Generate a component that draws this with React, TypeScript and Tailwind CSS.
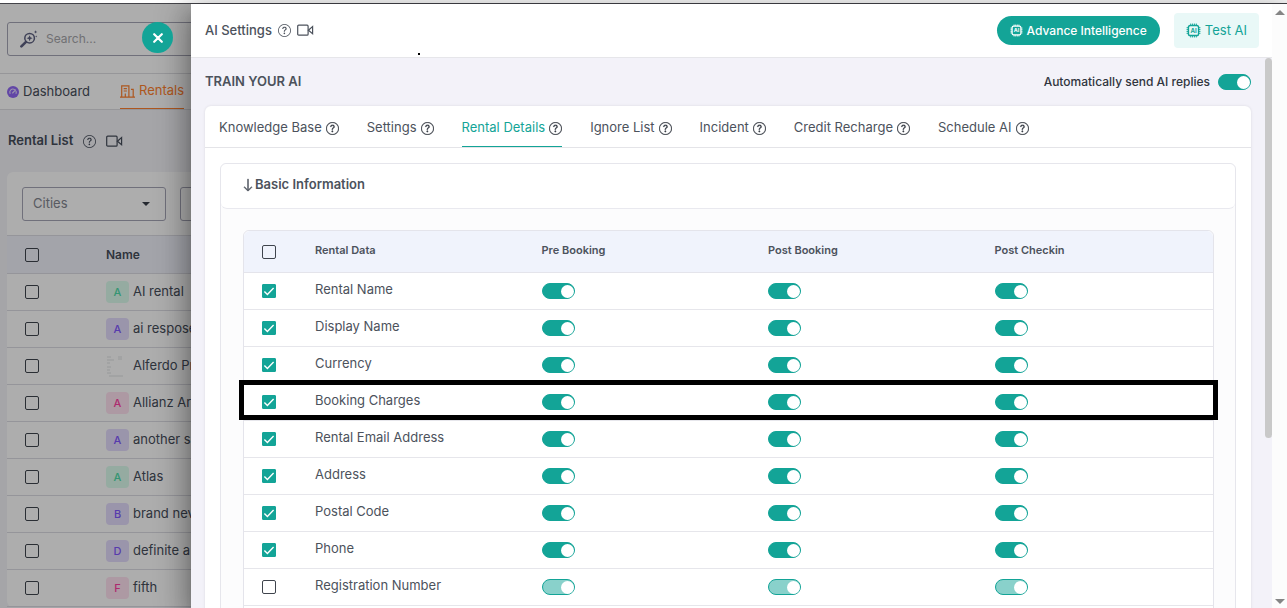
import { BsArrowDown, BsQuestionCircle } from "react-icons/bs";

type Rental = {
  name: string;
  tone?: "green" | "purple" | "pink";
};

const rentals: Rental[] = [
  { name: "AI rental", tone: "green" },
  { name: "ai respose", tone: "purple" },
  { name: "Alferdo Pr" },
  { name: "Allianz Are", tone: "pink" },
  { name: "another s", tone: "purple" },
  { name: "Atlas", tone: "green" },
  { name: "brand nev", tone: "purple" },
  { name: "definite a", tone: "purple" },
  { name: "fifth", tone: "pink" },
];

const tones = {
  green: "bg-[#dcfcee] text-[#4fdcaa]",
  purple: "bg-[#e4dcfd] text-[#8058ff]",
  pink: "bg-[#ffe2f1] text-[#ff3fa4]",
};

const tabs = [
  "Knowledge Base",
  "Settings",
  "Rental Details",
  "Ignore List",
  "Incident",
  "Credit Recharge",
  "Schedule AI",
];

const stages = ["Pre Booking", "Post Booking", "Post Checkin"];

const fields = [
  { label: "Rental Name", on: true },
  { label: "Display Name", on: true },
  { label: "Currency", on: true },
  { label: "Booking Charges", on: true, highlight: true },
  { label: "Rental Email Address", on: true },
  { label: "Address", on: true },
  { label: "Postal Code", on: true },
  { label: "Phone", on: true },
  { label: "Registration Number", on: false },
  { label: "Property Type", on: false },
];

const Checkbox = ({ label, checked = false }: { label: string; checked?: boolean }) => (
  <span className="grid size-[14px]">
    <input
      type="checkbox"
      aria-label={label}
      defaultChecked={checked}
      className="peer size-[14px] appearance-none rounded-[2px] border border-[#3f444d] [grid-area:1/1] checked:rounded-[1px] checked:border-[#13a497] checked:bg-[#13a497]"
    />
    <svg
      viewBox="0 0 14 14"
      className="pointer-events-none hidden size-[14px] [grid-area:1/1] peer-checked:block"
      fill="none"
      stroke="white"
      strokeWidth="1.4"
    >
      <path d="M2.4 7.4l3 3 6.2-6.4" />
    </svg>
  </span>
);

const Switch = ({ label, disabled = false }: { label: string; disabled?: boolean }) => (
  <input
    type="checkbox"
    role="switch"
    aria-label={label}
    defaultChecked
    disabled={disabled}
    className="flex h-4 w-[33px] shrink-0 appearance-none items-center rounded-full border border-[#13a497] bg-[#b8b8b8] before:size-[13px] before:rounded-full before:bg-white checked:justify-end checked:bg-[#13a497] disabled:bg-[#89d1cb]"
  />
);

const VideoIcon = () => (
  <svg viewBox="0 0 17 13" className="h-[13px] w-[17px]" fill="none" stroke="currentColor" strokeWidth="1.2">
    <rect x="0.7" y="1.2" width="10.4" height="10" rx="1" />
    <path d="M11.4 6.2l4.2-3.6v7.2z" />
  </svg>
);

const ChipIcon = ({ className }: { className: string }) => (
  <svg viewBox="0 0 16 16" className={className} fill="none" stroke="currentColor">
    <rect x="2.6" y="2.6" width="10.8" height="10.8" rx="2" strokeWidth="1.5" />
    <path
      d="M5 .6v2M7 .6v2M9 .6v2M11 .6v2M5 13.4v2M7 13.4v2M9 13.4v2M11 13.4v2M.6 5h2M.6 7h2M.6 9h2M.6 11h2M13.4 5h2M13.4 7h2M13.4 9h2M13.4 11h2"
      strokeWidth="1"
    />
    <text x="8" y="10.4" textAnchor="middle" fontSize="6.5" fontWeight="700" fill="currentColor" stroke="none">
      AI
    </text>
  </svg>
);

const SearchIcon = () => (
  <svg viewBox="0 0 18 18" className="size-[18px] text-[#5d6080]" fill="none" stroke="currentColor">
    <circle cx="9.6" cy="8.2" r="4.8" strokeWidth="1.5" />
    <path d="M6 11.8l-4.6 4.6" strokeWidth="2.6" strokeLinecap="round" />
    <path d="M9.6 5.2l.9 2.1 2.1.9-2.1.9-.9 2.1-.9-2.1-2.1-.9 2.1-.9z" fill="currentColor" stroke="none" />
    <path d="M15.6.2l.5 1.2 1.2.5-1.2.5-.5 1.2-.5-1.2-1.2-.5 1.2-.5zM16.2 5.4l.3.7.7.3-.7.3-.3.7-.3-.7-.7-.3.7-.3z" fill="currentColor" stroke="none" />
  </svg>
);

const DashboardIcon = () => (
  <svg viewBox="0 0 12 12" className="size-3" fill="none">
    <circle cx="6" cy="6" r="6" fill="#9168f5" />
    <path d="M3 7.4a3.2 3.2 0 0 1 4.4-4M9 5.2a3.2 3.2 0 0 1 .1 2.2M5.6 7l3-3.2" stroke="#e6dcff" strokeWidth="1.1" strokeLinecap="round" />
  </svg>
);

const BuildingIcon = () => (
  <svg viewBox="0 0 15 13" className="h-[13px] w-[15px]" fill="none" stroke="currentColor" strokeWidth="1.2">
    <path d="M0 12.2h15M1.7 12V.9h7.2V12M11 4.4h2.2V12M3.7 3.6h3.2M3.7 6h3.2M5.3 12V8.6" />
  </svg>
);

const RentalsPage = () => (
  <aside className="relative w-[191px] shrink-0 overflow-hidden whitespace-nowrap bg-[#f3f3f8] text-[#464d5a]">
    <div className="flex h-[70px] items-center border-b border-[#dddde2] bg-white pl-[7px]">
      <label className="flex h-[34px] w-[240px] shrink-0 items-center gap-2 rounded-[3px] border border-[#a5a5b6] pl-3">
        <SearchIcon />
        <input
          type="text"
          placeholder="Search..."
          aria-label="Search"
          className="w-24 text-xs outline-none placeholder:text-[#a6a6aa]"
        />
      </label>
    </div>

    <nav className="flex h-9 gap-[30px] border-b border-[#dddde2] bg-white pl-[7px] text-[13px]">
      <a href="#dashboard" className="flex items-center gap-1">
        <DashboardIcon />
        Dashboard
      </a>
      <a href="#rentals" className="flex items-center gap-1 border-b border-[#ff812e] text-[#ff812e]">
        <BuildingIcon />
        Rentals
      </a>
    </nav>

    <div className="flex h-[62px] items-center gap-[10px] pl-2">
      <h1 className="text-[13px] font-semibold">Rental List</h1>
      <BsQuestionCircle className="size-[13px]" />
      <VideoIcon />
    </div>

    <section className="ml-[7px] w-[600px] rounded-md bg-white">
      <div className="flex h-[63px] items-center gap-[14px] px-[15px]">
        {["Cities", "Status"].map((name) => (
          <div key={name} className="grid items-center">
            <select
              aria-label={name}
              className="h-[34px] w-36 appearance-none rounded-[3px] border border-[#a5a5b6] px-[10px] text-[13px] text-[#82858f] [grid-area:1/1]"
            >
              <option>{name}</option>
            </select>
            <span className="pointer-events-none mr-4 justify-self-end border-x-4 border-t-4 border-x-transparent border-t-[#373d48] [grid-area:1/1]" />
          </div>
        ))}
      </div>
      <table className="w-full table-fixed text-left">
        <colgroup>
          <col className="w-[90px]" />
          <col />
        </colgroup>
        <thead>
          <tr className="h-[38px] border-y border-[#dcdce4] bg-[#f0f2fb] text-xs">
            <th className="pl-[18px]">
              <Checkbox label="Select all rentals" />
            </th>
            <th className="pl-[9px] font-semibold">Name</th>
          </tr>
        </thead>
        <tbody>
          {rentals.map(({ name, tone }) => (
            <tr key={name} className="h-[37px] border-b border-[#dcdce4] text-[13px]">
              <td className="pl-[18px]">
                <Checkbox label={`Select ${name}`} />
              </td>
              <td className="pl-[9px]">
                <div className="flex items-center gap-1">
                  {tone ? (
                    <span className={`grid h-[22px] w-[23px] place-items-center rounded text-[11px] font-medium ${tones[tone]}`}>
                      {name[0].toUpperCase()}
                    </span>
                  ) : (
                    <svg viewBox="0 0 23 22" className="h-[22px] w-[23px]" stroke="#dfe1e4" strokeWidth="1">
                      <path d="M1 2h4M1 5h7M12 2h4M12 4h4M1 8h3M1 12h4M1 15h3M1 18h4M3 21h14" />
                    </svg>
                  )}
                  {name}
                </div>
              </td>
            </tr>
          ))}
        </tbody>
      </table>
    </section>

    <div className="absolute inset-0 bg-black/32" />
    <button
      type="button"
      aria-label="Close"
      className="absolute top-[18px] left-[142px] z-20 grid size-[31px] place-items-center rounded-full bg-[#13a497]"
    >
      <svg viewBox="0 0 10 10" className="size-[10px]" stroke="white" strokeWidth="2.2" strokeLinecap="round">
        <path d="M1.2 1.2l7.6 7.6M8.8 1.2L1.2 8.8" />
      </svg>
    </button>
  </aside>
);

const DrawerHeader = () => (
  <header className="relative flex h-[54px] shrink-0 items-center justify-between border-b border-[#e6e6ea] bg-white pr-[13px] pl-[14px]">
    <div className="flex items-center gap-[6px]">
      <h2 className="text-[13px] font-medium">AI Settings</h2>
      <BsQuestionCircle className="size-[13px]" />
      <VideoIcon />
    </div>
    <span className="absolute bottom-[2px] left-[227px] size-[2px] bg-black" />
    <div className="flex items-center gap-[14px]">
      <button
        type="button"
        className="flex h-[29px] items-center gap-1 rounded-full bg-[#13a497] px-[13px] text-xs font-medium text-white"
      >
        <ChipIcon className="size-[13px]" />
        Advance Intelligence
      </button>
      <button
        type="button"
        className="flex h-[35px] items-center gap-1 rounded bg-[#e9f8f7] px-3 text-[13px] text-[#13a497]"
      >
        <ChipIcon className="size-[15px]" />
        Test AI
      </button>
    </div>
  </header>
);

const DetailsTable = () => (
  <table className="w-full table-fixed border-separate border-spacing-0 rounded-md border border-[#e4e4eb] bg-white text-left">
    <colgroup>
      <col className="w-[63px]" />
      <col />
      <col />
      <col />
      <col />
    </colgroup>
    <thead>
      <tr className="h-[42px] text-[11px] [&>th]:border-b [&>th]:border-[#e4e4eb] [&>th]:bg-[#f0f3fc]">
        <th className="rounded-tl-md pl-[18px]">
          <Checkbox label="Select all rental data" />
        </th>
        <th className="px-2 pb-[2px] font-semibold">Rental Data</th>
        {stages.map((stage) => (
          <th key={stage} className="px-2 pb-[2px] font-semibold last:rounded-tr-md">
            {stage}
          </th>
        ))}
      </tr>
    </thead>
    <tbody>
      {fields.map(({ label, on, highlight }) => (
        <tr key={label} className="relative h-[37px] text-[13px] [&>td]:border-b [&>td]:border-[#e6e6eb]">
          <td className="pl-[18px]">
            <Checkbox label={label} checked={on} />
            {highlight && (
              <span className="pointer-events-none absolute -inset-x-[5px] -top-1 bottom-px border-[5px] border-black" />
            )}
          </td>
          <td className="px-2 pb-[2px]">{label}</td>
          {stages.map((stage) => (
            <td key={stage} className="px-2">
              <Switch label={`${label} ${stage}`} disabled={!on} />
            </td>
          ))}
        </tr>
      ))}
    </tbody>
  </table>
);

const SettingsDrawer = () => (
  <main className="relative z-10 flex min-w-0 flex-1 bg-white text-[#4c525c] shadow-[0_8px_10px_-5px_rgba(0,0,0,0.2),0_16px_24px_2px_rgba(0,0,0,0.14),0_6px_30px_5px_rgba(0,0,0,0.3)]">
    <div className="flex min-w-0 flex-1 flex-col">
      <DrawerHeader />
      <div className="flex min-h-0 flex-1 bg-[#f3f2f9]">
        <div className="min-w-0 flex-1 overflow-hidden px-[14px]">
          <div className="flex h-12 items-center justify-between">
            <h3 className="text-[13px] font-semibold">TRAIN YOUR AI</h3>
            <label className="flex items-center gap-2 text-xs font-medium text-[#30353e]">
              Automatically send AI replies
              <Switch label="Automatically send AI replies" />
            </label>
          </div>

          <div className="rounded-md bg-white shadow-[0_0_3px_rgba(0,0,0,0.1)]">
            <div role="tablist" className="flex h-[42px] gap-7 border-b border-[#e4e4e8] px-[14px] text-[13px]">
              {tabs.map((tab) => (
                <button
                  key={tab}
                  type="button"
                  role="tab"
                  aria-selected={tab === "Rental Details"}
                  className="flex items-center gap-1 border-b border-transparent pt-1 whitespace-nowrap aria-selected:border-[#13a497] aria-selected:text-[#13a497]"
                >
                  {tab}
                  <BsQuestionCircle className="size-[13px] text-[#3a3f48]" strokeWidth={0.3} />
                </button>
              ))}
            </div>

            <div className="px-[15px] pt-[15px]">
              <section className="rounded-md border border-[#e6e6ec] bg-[#fcfcfd]">
                <h4 className="flex h-[45px] items-center rounded-md border-b border-[#e9e9ef] bg-white pb-[2px] pl-5 text-[13px] font-semibold">
                  <BsArrowDown className="size-[14px]" strokeWidth={0.6} />
                  Basic Information
                </h4>
                <div className="pt-[21px] pr-[21px] pl-[22px]">
                  <DetailsTable />
                </div>
              </section>
            </div>
          </div>
        </div>
        <div className="w-[7px] shrink-0">
          <div className="h-[69%] rounded-full bg-[#c9c9c9]" />
        </div>
      </div>
    </div>

    <div className="flex w-[15px] shrink-0 flex-col items-center justify-between bg-[#fcfcfc] pt-[6px] pb-1">
      <span className="border-x-[5px] border-b-[5px] border-x-transparent border-b-[#858585]" />
      <span className="border-x-[5px] border-t-[5px] border-x-transparent border-t-[#858585]" />
    </div>
  </main>
);

export default function App() {
  return (
    <div className="flex h-screen flex-col overflow-hidden bg-white pt-[3px] font-[Inter,'Noto_Sans',sans-serif]">
      <div className="flex min-h-0 flex-1 border-t border-[#444449]">
        <RentalsPage />
        <SettingsDrawer />
      </div>
    </div>
  );
}
